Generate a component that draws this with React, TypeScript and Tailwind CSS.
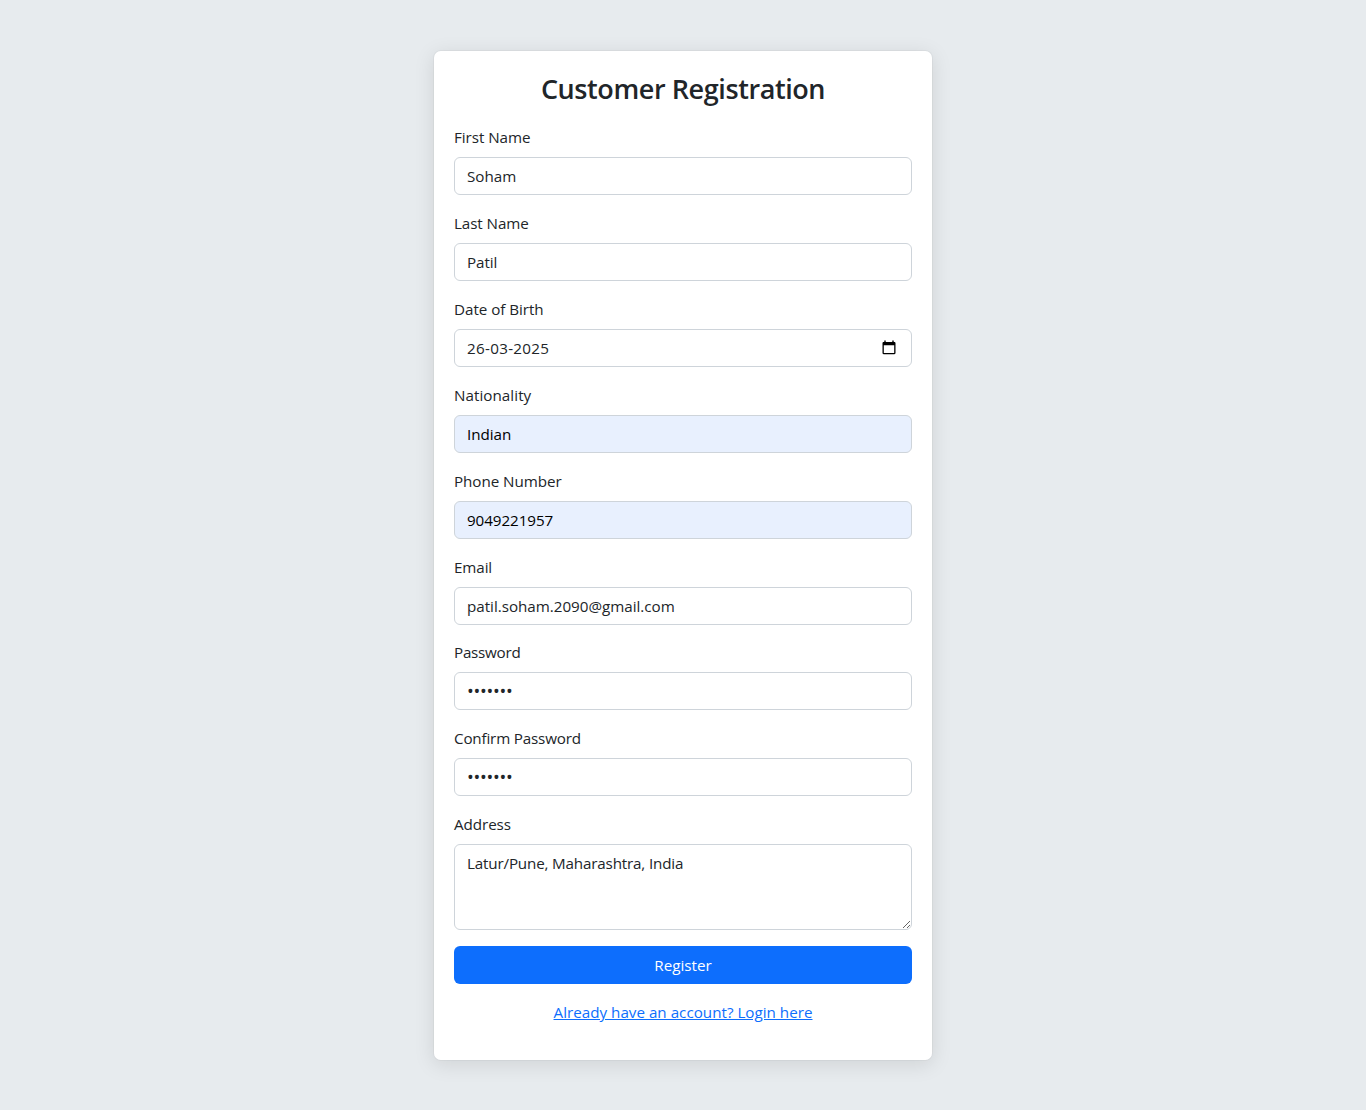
type FieldProps = {
  id: string;
  label: string;
  value: string;
  type?: string;
  labelClass?: string;
  inputClass?: string;
  autofilled?: boolean;
  calendar?: boolean;
};

function Field({
  id,
  label,
  value,
  type = "text",
  labelClass = "",
  inputClass = "",
  autofilled = false,
  calendar = false,
}: FieldProps) {
  return (
    <div>
      <label htmlFor={id} className={`mb-2 block leading-6 ${labelClass}`}>
        {label}
      </label>
      <div
        className={`flex h-[38px] items-center rounded-md border border-[#ced4da] px-3 ${
          autofilled ? "bg-[#e8f0fe] text-black" : "bg-white"
        }`}
      >
        <input
          id={id}
          type={type}
          defaultValue={value}
          className={`h-6 min-w-0 flex-1 bg-transparent leading-6 outline-none ${inputClass}`}
        />
        {calendar && (
          <svg className="mr-[3px] mb-px h-[15px] w-[14px]" viewBox="0 0 14 15" fill="none">
            <path
              fill="#000"
              fillRule="evenodd"
              d="M2.3 0.6h1.4V2h6.6V0.6h1.4V2h.7c.6 0 1.1.5 1.1 1.1v10c0 .6-.5 1.1-1.1 1.1H1.6c-.6 0-1.1-.5-1.1-1.1v-10C.5 2.5 1 2 1.6 2h.7zM1.8 5.200v7.700h10.400V5.200z"
            />
          </svg>
        )}
      </div>
    </div>
  );
}

export default function App() {
  return (
    <div className="flex h-[1110px] items-start justify-center bg-[#e7ebee] pt-[50px] font-['Open_Sans',sans-serif] text-[15.2px] text-[#212529]">
      <main className="h-[1011px] w-[500px] rounded-lg border border-black/[0.03] bg-white bg-clip-padding px-5 pt-5 shadow-[0_4px_20px_rgba(0,0,0,0.1)]">
        <h2 className="mb-5 h-[34px] text-center text-[27px] leading-[36px] font-semibold tracking-[-0.41px]">
          Customer Registration
        </h2>
        <form className="flex flex-col gap-4">
          <Field
            id="first"
            label="First Name"
            value="Soham"
            labelClass="tracking-[-0.05px]"
            inputClass="tracking-[0.02px]"
          />
          <Field
            id="last"
            label="Last Name"
            value="Patil"
            labelClass="tracking-[-0.08px]"
            inputClass="tracking-[-0.05px]"
          />
          <Field
            id="dob"
            label="Date of Birth"
            value="26-03-2025"
            labelClass="tracking-[-0.04px]"
            inputClass="tracking-[0.31px]"
            calendar
          />
          <Field
            id="nationality"
            label="Nationality"
            value="Indian"
            labelClass="tracking-[0.05px]"
            inputClass="tracking-[-0.03px]"
            autofilled
          />
          <Field
            id="phone"
            label="Phone Number"
            value="9049221957"
            labelClass="tracking-[-0.05px]"
            inputClass="tracking-[-0.06px]"
            autofilled
          />
          <div className="-mb-px">
            <Field
              id="email"
              label="Email"
              value="patil.soham.2090@gmail.com"
              labelClass="tracking-[-0.1px]"
              inputClass="tracking-[-0.02px]"
            />
          </div>
          <Field
            id="password"
            label="Password"
            value="abcdefg"
            type="password"
            labelClass="tracking-[-0.25px]"
            inputClass="text-[18px] tracking-[-0.26px]"
          />
          <Field
            id="confirm"
            label="Confirm Password"
            value="abcdefg"
            type="password"
            labelClass="tracking-[-0.17px]"
            inputClass="text-[18px] tracking-[-0.26px]"
          />
          <div>
            <label htmlFor="address" className="mb-2 block leading-6 tracking-[-0.06px]">
              Address
            </label>
            <textarea
              id="address"
              defaultValue="Latur/Pune, Maharashtra, India"
              className="block h-[86px] w-full resize-y rounded-md border border-[#ced4da] bg-white px-3 py-1.5 leading-6 tracking-[-0.165px] outline-none"
            />
          </div>
          <button type="button" className="h-[38px] rounded-md bg-[#0d6efd] leading-6 text-white">
            Register
          </button>
          <p className="text-center leading-6 tracking-[0.01px] text-[#0d6efd]">
            <a href="#login" className="underline">
              Already have an account? Login here
            </a>
          </p>
        </form>
      </main>
    </div>
  );
}
